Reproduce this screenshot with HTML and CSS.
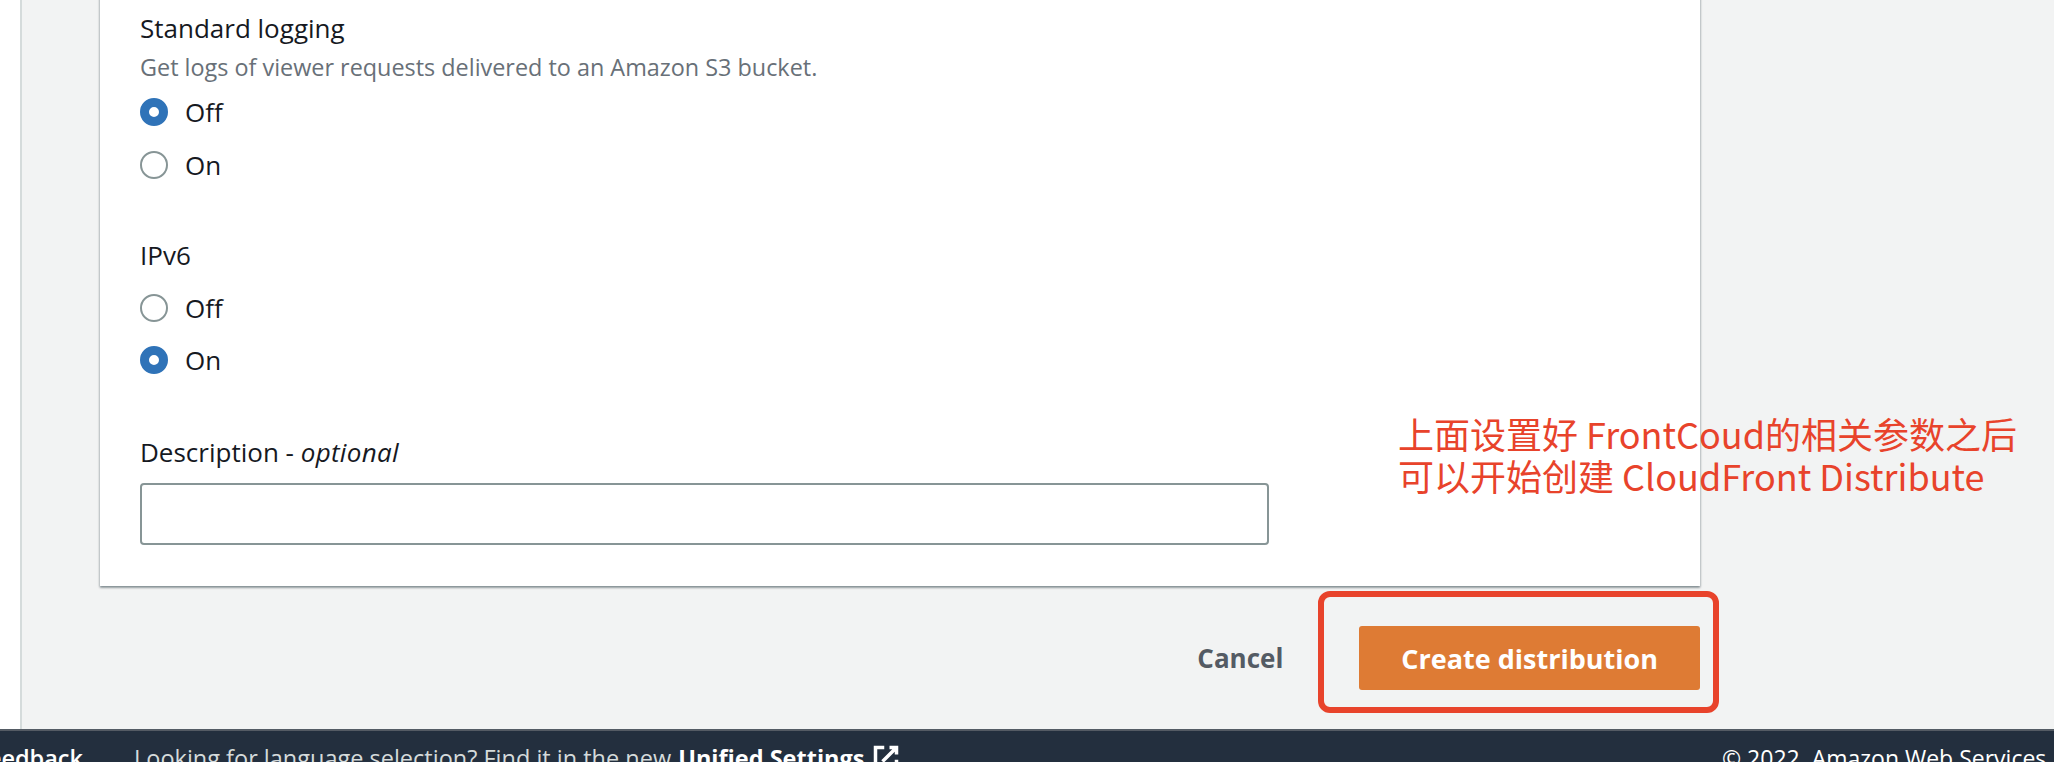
FILE: index.html
```html
<!DOCTYPE html>
<html lang="en">
<head>
<meta charset="utf-8">
<title>Create distribution</title>
<link rel="stylesheet" href="styles.css">
</head>
<body>
<div class="page">
  <div class="layout">
    <aside class="rail"></aside>
    <main class="content">
      <section class="card">
        <div class="field">
          <div class="field-label">Standard logging</div>
          <div class="field-desc">Get logs of viewer requests delivered to an Amazon S3 bucket.</div>
          <div class="radio-group">
            <div class="radio"><span class="radio-dot checked"></span><span>Off</span></div>
            <div class="radio"><span class="radio-dot"></span><span>On</span></div>
          </div>
        </div>
        <div class="field field-ipv6">
          <div class="field-label">IPv6</div>
          <div class="radio-group radio-group-tight">
            <div class="radio"><span class="radio-dot"></span><span>Off</span></div>
            <div class="radio"><span class="radio-dot checked"></span><span>On</span></div>
          </div>
        </div>
        <div class="field field-desc-input">
          <div class="field-label">Description - <em>optional</em></div>
          <div class="text-input"></div>
        </div>
      </section>
      <div class="actions">
        <span class="btn-link">Cancel</span>
        <div class="btn-wrap">
          <span class="btn-primary">Create distribution</span>
          <span class="highlight"></span>
        </div>
      </div>
    </main>
  </div>
  <footer class="footer">
    <div class="footer-left">
      <div class="feedback-cell">
        <span class="feedback">
          <svg class="fb-icon" viewBox="0 0 16 16" width="22" height="22"><path d="M2 2h12v9H7l-3 3v-3H2z" fill="none" stroke="#fff" stroke-width="2" stroke-linejoin="round"/></svg>
          Feedback
        </span>
      </div>
      <span class="lang">Looking for language selection? Find it in the new <span class="unified">Unified Settings</span><svg class="ext-icon" viewBox="0 0 16 16" width="28" height="28"><path d="M10 2h4v4M6 10l8-8M14 9v5H2V2h5" fill="none" stroke="#fff" stroke-width="2"/></svg></span>
    </div>
    <div class="copyright">© 2022, Amazon Web Services, Inc. or its affiliates.</div>
  </footer>
  <div class="annotation">上面设置好 FrontCoud的相关参数之后<br>可以开始创建 CloudFront Distribute</div>
</div>
</body>
</html>
```

FILE: styles.css
```css
* { box-sizing: border-box; }
html, body { margin: 0; height: 762px; overflow: hidden; }
body {
  font-family: "Open Sans", "Noto Sans CJK SC", sans-serif;
  color: #16191f;
  background: #f2f3f3;
}
.page { position: relative; height: 762px; display: flex; flex-direction: column; }
.layout { height: 729px; display: flex; overflow: hidden; flex: none; }
.rail { width: 22px; flex: none; background: #fff; border-right: 2px solid #d5dbdb; }
.content { flex: 1; padding-left: 78px; }

.card {
  width: 1600px;
  margin-top: -20px;
  padding: 30px 40px 41px;
  background: #fff;
  box-shadow: 0 2px 2px rgba(0, 28, 36, 0.3), 1px 1px 2px rgba(0, 28, 36, 0.15), -1px 1px 2px rgba(0, 28, 36, 0.15);
}
.field-label { font-size: 26px; line-height: 36px; }
.field-label em { font-style: italic; letter-spacing: 0.3px; }
.field-desc { font-size: 23.4px; line-height: 30px; color: #687078; margin-top: 6px; }
.radio-group { display: flex; flex-direction: column; gap: 16.5px; margin-top: 12px; }
.radio-group-tight { margin-top: 16.5px; }
.radio { display: flex; align-items: center; gap: 17px; height: 36px; font-size: 26px; line-height: 36px; }
.radio-dot { width: 28px; height: 28px; flex: none; border-radius: 50%; border: 2px solid #879596; background: #fff; }
.radio-dot.checked { border: 9px solid #2f73b8; }
.field-ipv6 { margin-top: 54.5px; }
.field-desc-input { margin-top: 56px; }
.text-input { margin-top: 13px; width: 1129px; height: 62px; border: 2px solid #879596; border-radius: 4px; background: #fff; }

.actions { width: 1600px; display: flex; justify-content: flex-end; align-items: center; margin-top: 40px; }
.btn-link { font-size: 26px; font-weight: 700; color: #545b64; margin-right: 76px; line-height: 36px; }
.btn-wrap { position: relative; }
.btn-primary {
  display: flex; align-items: center; height: 64px; padding: 0 42px;
  background: #de7b34; color: #fff; font-size: 27px; font-weight: 700; border-radius: 3px;
}
.highlight {
  position: absolute; left: -41px; top: -35px; right: -19px; bottom: -23px;
  border: 6px solid #e8432b; border-radius: 12px;
}

.footer {
  flex: none; height: 33px; overflow: hidden;
  background: #232f3e; border-top: 2px solid #545b64;
  display: grid; grid-template-columns: 1722px auto;
  padding-top: 11px; font-size: 23.5px; line-height: 32px; white-space: nowrap; color: #d5dbdb;
}
.footer-left { display: flex; align-items: flex-start; }
.feedback-cell { width: 83px; flex: none; display: flex; justify-content: flex-end; }
.feedback { display: flex; align-items: center; gap: 8px; color: #fff; font-weight: 600; flex: none; }
.lang { margin-left: 51px; display: flex; align-items: flex-start; }
.unified { color: #fff; font-weight: 700; margin-left: 7px; }
.ext-icon { margin-left: 8px; margin-top: 2px; }
.copyright { color: #fff; font-size: 23px; }

.annotation {
  position: absolute; left: 1398px; top: 412px;
  font-family: "Noto Sans CJK SC", sans-serif; font-size: 36px; line-height: 42px;
  color: #e8432b; white-space: nowrap;
}
```
